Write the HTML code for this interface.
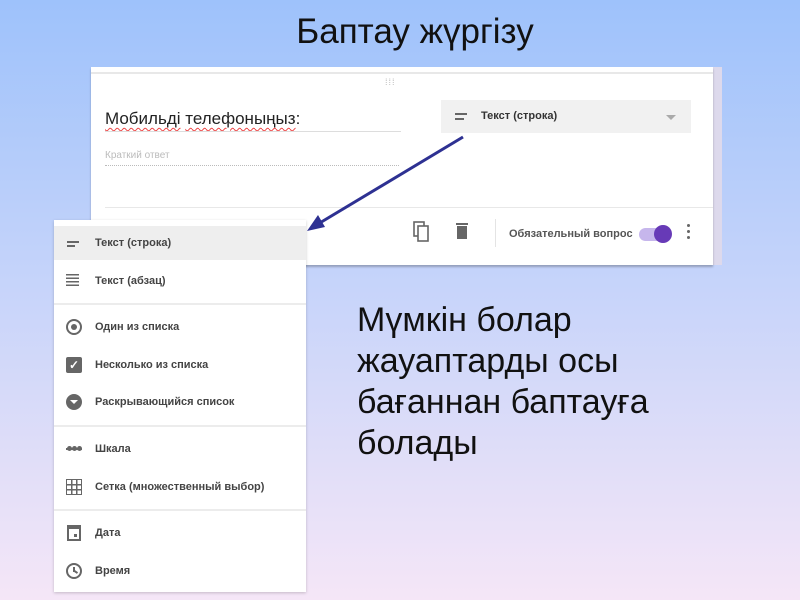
<!DOCTYPE html>
<html><head><meta charset="utf-8"><style>
*{margin:0;padding:0;box-sizing:border-box}
body{width:800px;height:600px;overflow:hidden;position:relative;font-family:"Liberation Sans",sans-serif;background:linear-gradient(180deg,#9ec2fb 0%,#c4d3fa 45%,#f5e6f7 100%)}
.abs{position:absolute}
.card{left:91px;top:67px;width:622px;height:198px;background:#fff;box-shadow:0 2px 2px rgba(0,0,0,.25)}
.menu{left:54px;top:220px;width:252px;height:372px;background:#fff;box-shadow:0 1px 3px rgba(0,0,0,.2)}
.it{position:absolute;left:0;width:252px;height:34px;font-size:11px;color:#444;font-weight:bold;line-height:34px;padding-left:41px}
.ic{position:absolute;left:12px;top:9px;width:16px;height:16px}
.dv{position:absolute;left:0;width:252px;height:2px;background:#ececec}
</style></head><body>
<div class="abs" style="left:0;width:830px;top:12px;text-align:center;font-size:35px;color:#111">Баптау жүргізу</div>
<div class="abs" style="left:713px;top:67px;width:9px;height:198px;background:#ddd9ec"></div>
<div class="abs card">
 <div class="abs" style="left:0;top:5px;width:622px;height:2px;background:#e8e8e8"></div>
 <div class="abs" style="left:294px;top:10px;font-size:9px;color:#bbb;letter-spacing:1px">⁞⁞⁞</div>
 <div class="abs" style="left:14px;top:42px;font-size:17px;color:#222"><span style="text-decoration:underline wavy #e44;text-underline-offset:3px;text-decoration-thickness:1px">Мобильді</span> <span style="text-decoration:underline wavy #e44;text-underline-offset:3px;text-decoration-thickness:1px">телефоныңыз</span>:</div>
 <div class="abs" style="left:14px;top:64px;width:296px;height:1px;background:#ddd"></div>
 <div class="abs" style="left:14px;top:83px;font-size:10px;color:#bbb">Краткий ответ</div>
 <div class="abs" style="left:14px;top:98px;width:294px;border-top:1px dotted #bbb"></div>
 <div class="abs" style="left:350px;top:33px;width:250px;height:33px;background:#f1f1f1">
  <div class="abs" style="left:14px;top:13px;width:12px;height:2px;background:#666"></div>
  <div class="abs" style="left:14px;top:18px;width:9px;height:2px;background:#666"></div>
  <div class="abs" style="left:40px;top:10px;font-size:11px;font-weight:bold;color:#333">Текст (строка)</div>
  <div class="abs" style="left:225px;top:15px;border:5px solid transparent;border-top:5px solid #aaa"></div>
 </div>
 <div class="abs" style="left:14px;top:140px;width:608px;height:1px;background:#e8e8e8"></div>
 <svg class="abs" style="left:321px;top:154px" width="20" height="22" viewBox="0 0 20 22"><rect x="2" y="1" width="10" height="14" fill="none" stroke="#666" stroke-width="1.6"/><rect x="6" y="5" width="10" height="15" fill="#fff" stroke="#666" stroke-width="1.6"/></svg>
 <svg class="abs" style="left:364px;top:155px" width="14" height="18" viewBox="0 0 14 18"><rect x="1" y="1" width="12" height="2" fill="#666"/><rect x="2" y="4" width="10" height="13" fill="#666"/></svg>
 <div class="abs" style="left:404px;top:152px;width:1px;height:28px;background:#e4e4e4"></div>
 <div class="abs" style="left:418px;top:161px;font-size:11px;font-weight:bold;color:#555">Обязательный вопрос</div>
 <div class="abs" style="left:548px;top:161px;width:28px;height:13px;border-radius:7px;background:#c6b6ec"></div>
 <div class="abs" style="left:563px;top:158px;width:18px;height:18px;border-radius:50%;background:#673ab7"></div>
 <div class="abs" style="left:596px;top:157px;width:3px;height:3px;background:#666;border-radius:50%;box-shadow:0 6px #666,0 12px #666"></div>
</div>
<svg class="abs" style="left:0;top:0" width="800" height="600"><line x1="463" y1="137" x2="318" y2="224" stroke="#2e3192" stroke-width="3"/><polygon points="307,231 318,215 325,227" fill="#2e3192"/></svg>
<div class="abs menu">
 <div class="it" style="top:6px;background:#eee"><div class="ic"><div class="abs" style="left:1px;top:6px;width:12px;height:2px;background:#666"></div><div class="abs" style="left:1px;top:10px;width:8px;height:2px;background:#666"></div></div>Текст (строка)</div>
 <div class="it" style="top:44px"><div class="ic" style="top:10px;background:repeating-linear-gradient(#666 0 1.5px,transparent 1.5px 3.5px);width:13px;height:14px"></div>Текст (абзац)</div>
 <div class="dv" style="top:83px"></div>
 <div class="it" style="top:90px"><div class="ic" style="border:2px solid #666;border-radius:50%"><div class="abs" style="left:3px;top:3px;width:6px;height:6px;border-radius:50%;background:#666"></div></div>Один из списка</div>
 <div class="it" style="top:128px"><div class="ic" style="background:#666;border-radius:2px;color:#fff;font-size:12px;line-height:16px;text-align:center">✓</div>Несколько из списка</div>
 <div class="it" style="top:165px"><div class="ic" style="background:#666;border-radius:50%"><div class="abs" style="left:4px;top:6px;border:4px solid transparent;border-top:4px solid #fff"></div></div>Раскрывающийся список</div>
 <div class="dv" style="top:205px"></div>
 <div class="it" style="top:212px"><div class="ic"><div class="abs" style="left:0;top:7px;width:16px;height:2px;background:#666"></div><div class="abs" style="left:1px;top:5px;width:5px;height:5px;border-radius:50%;background:#666;box-shadow:5px 0 #666,10px 0 #666"></div></div>Шкала</div>
 <div class="it" style="top:250px"><div class="ic" style="border:1.5px solid #666;background:linear-gradient(90deg,transparent 4px,#666 4px 5.5px,transparent 5.5px 9px,#666 9px 10.5px,transparent 10.5px),linear-gradient(transparent 4px,#666 4px 5.5px,transparent 5.5px 9px,#666 9px 10.5px,transparent 10.5px)"></div>Сетка (множественный выбор)</div>
 <div class="dv" style="top:289px"></div>
 <div class="it" style="top:296px"><div class="ic" style="border:2px solid #666;border-top-width:4px;left:13px;width:14px"><div class="abs" style="left:5px;top:5px;width:3px;height:3px;background:#666"></div></div>Дата</div>
 <div class="it" style="top:334px"><div class="ic" style="border:2px solid #666;border-radius:50%"><div class="abs" style="left:5px;top:2px;width:1.5px;height:5px;background:#666"></div><div class="abs" style="left:6px;top:6px;width:4px;height:1.5px;background:#666;transform:rotate(35deg)"></div></div>Время</div>
</div>
<div class="abs" style="left:357px;top:300px;font-size:34px;line-height:41px;color:#111">Мүмкін болар<br>жауаптарды осы<br>бағаннан баптауға<br>болады</div>
</body></html>
